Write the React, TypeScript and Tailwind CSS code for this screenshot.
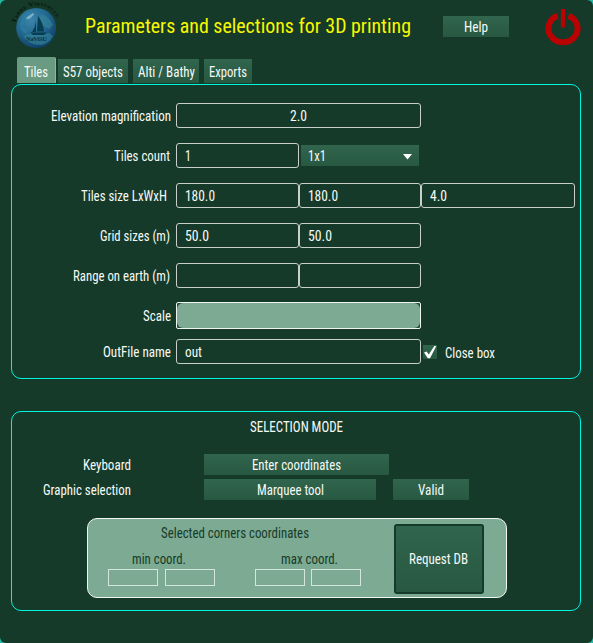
import { useLayoutEffect, useRef, useState, type ReactNode } from "react";

function Fit({ w, children, className = "" }: { w: number; children: string; className?: string }) {
  const ref = useRef<HTMLSpanElement>(null);
  const [scale, setScale] = useState(0.88);
  useLayoutEffect(() => {
    if (ref.current && ref.current.offsetWidth) setScale(w / ref.current.getBoundingClientRect().width * scale);
  }, [w]);
  return (
    <span className={`inline-block shrink-0 whitespace-nowrap ${className}`} style={{ width: w }}>
      <span ref={ref} className="inline-block origin-left" style={{ transform: `scaleX(${scale})` }}>
        {children}
      </span>
    </span>
  );
}

const gradient = "bg-linear-to-b from-[#31654d] to-[#285841]";

function Button({ className = "", children }: { className?: string; children: ReactNode }) {
  return <button className={`flex items-center justify-center ${gradient} ${className}`}>{children}</button>;
}

function Row({ label, w, className = "", pad = "pr-[5px]", children }: { label: string; w: number; className?: string; pad?: string; children: ReactNode }) {
  return (
    <div className={`flex items-center ${className}`}>
      <div className={`flex w-[164px] justify-end ${pad}`}>
        <Fit w={w}>{label}</Fit>
      </div>
      {children}
    </div>
  );
}

function Field({ className = "", children }: { className?: string; children?: ReactNode }) {
  return <div className={`flex h-[25px] shrink-0 items-center rounded-[3px] border border-[#c9d0cc] ${className}`}>{children}</div>;
}

function Logo() {
  return (
    <svg width="52" height="50" viewBox="0 0 52 50" className="shrink-0">
      <defs>
        <radialGradient id="globe" cx="38%" cy="30%" r="72%">
          <stop offset="0" stopColor="#3c85a8" />
          <stop offset="0.55" stopColor="#226890" />
          <stop offset="1" stopColor="#103f68" />
        </radialGradient>
        <path id="arc" d="M5.400 23.500 A22 22 0 0 1 48.500 22.500" />
      </defs>
      <circle cx="26.2" cy="28" r="20" fill="url(#globe)" />
      <path d="M10 23q4-11 12-12q-2 6-7 10l-2 6 5 3-2 4q-7-4-6-11" fill="#2f7fa6" opacity=".6" />
      <path d="M31 14q9 3 12 11l-4 4-5-3-4-7zM13 36q9-4 17-1l9-2 4 3q-4 8-12 9-12 0-18-9" fill="#348396" opacity=".65" />
      <path d="M17 17l6-4 1 1.500-4 4-4 1z" fill="#8fc0d4" opacity=".8" />
      <path d="M28 16q5.500 8 6 15.500h-7zM26 20v12h-4q3.500-5 4-12zM20 32.500h17l-3 2.500H23z" fill="#073d50" />
      <text x="16" y="40.500" fontSize="6.500" fontWeight="700" fontFamily="Liberation Serif, serif" fill="#0a3443" textLength="21">NaViSU</text>
      <text fontSize="6" fontWeight="700" fontFamily="Liberation Serif, serif" fill="#04150f" style={{ fontVariant: "small-caps" }}>
        <textPath href="#arc" textLength="55" lengthAdjust="spacingAndGlyphs">Terre Virtuelle</textPath>
      </text>
    </svg>
  );
}

function Power() {
  return (
    <svg width="36" height="37" viewBox="0 0 36 37">
      <path d="M12.500 6.800A14.600 13.700 0 1 0 23.500 6.800" fill="none" stroke="#b90202" strokeWidth="6" />
      <path d="M18 0v18.500" stroke="#163a29" strokeWidth="8" />
      <path d="M18 0v18.500" stroke="#b90202" strokeWidth="4.200" />
    </svg>
  );
}

function CoordBox({ className = "" }: { className?: string }) {
  return <div className={`h-[17px] w-[50px] border border-[#d4e5dc] ${className}`} />;
}

export default function App() {
  return (
    <div className="h-[643px] w-[593px] overflow-hidden bg-[#20b9a5]">
      <div className="flex h-full flex-col rounded-[6px] bg-[#163a29] font-['Roboto_Condensed','Roboto',sans-serif] text-[14px] leading-[16px] text-[#f6faf7] [font-stretch:75%]">
        <header className="flex h-[57px] shrink-0 items-start pl-[10px]">
          <Logo />
          <div className="ml-[23px] pt-[14px] text-[20px] leading-[24px] text-[#f8f800]">
            <Fit w={326}>Parameters and selections for 3D printing</Fit>
          </div>
          <Button className="mt-[16px] ml-[32px] h-[21px] w-[66px]"><Fit w={24}>Help</Fit></Button>
          <div className="mt-[9px] ml-[36px]"><Power /></div>
        </header>
        <nav className="flex h-[27px] shrink-0 items-end pb-px pl-[17px]">
          <button className="flex h-[26px] w-[39px] items-center justify-center rounded-t-[2px] border-r border-[#83bd8e] bg-[#689b81] pt-[3px]"><Fit w={24}>Tiles</Fit></button>
          <Button className="ml-[2px] h-[24px] w-[70px] pt-px"><Fit w={60}>S57 objects</Fit></Button>
          <Button className="ml-[5px] h-[24px] w-[66px] pt-px"><Fit w={57}>Alti / Bathy</Fit></Button>
          <Button className="ml-[5px] h-[24px] w-[48px] pt-px"><Fit w={38}>Exports</Fit></Button>
        </nav>
        <main className="ml-[11px] flex h-[295px] w-[570px] shrink-0 flex-col rounded-[10px] border border-[#00f5e0] pt-[18px]">
          <Row label="Elevation magnification" w={120}>
            <Field className="w-[245px] justify-center"><Fit w={17}>2.0</Fit></Field>
          </Row>
          <Row label="Tiles count" w={56} pad="pr-[6px]" className="mt-[15px]">
            <Field className="w-[123px] pl-[8px]"><Fit w={6}>1</Fit></Field>
            <div className={`ml-[2px] flex h-[21px] w-[118px] items-center justify-between pr-[7px] pl-[7px] ${gradient}`}>
              <Fit w={18}>1x1</Fit>
              <svg width="9" height="6" viewBox="0 0 9 6" className="mt-[2px]"><path d="M0 0h9L4.500 5.500z" fill="#fff" /></svg>
            </div>
          </Row>
          <Row label="Tiles size LxWxH" w={86} pad="pr-[9px]" className="mt-[15px]">
            <Field className="w-[123px] pl-[8px]"><Fit w={30}>180.0</Fit></Field>
            <Field className="w-[122px] pl-[8px]"><Fit w={30}>180.0</Fit></Field>
            <Field className="w-[154px] pl-[8px]"><Fit w={17}>4.0</Fit></Field>
          </Row>
          <Row label="Grid sizes (m)" w={70} pad="pr-[6px]" className="mt-[15px]">
            <Field className="w-[123px] pl-[8px]"><Fit w={24}>50.0</Fit></Field>
            <Field className="w-[122px] pl-[8px]"><Fit w={24}>50.0</Fit></Field>
          </Row>
          <Row label="Range on earth (m)" w={97} pad="pr-[6px]" className="mt-[15px]">
            <Field className="w-[123px]" />
            <Field className="w-[122px]" />
          </Row>
          <Row label="Scale" w={28} className="mt-[14px]">
            <div className="h-[27px] w-[245px] rounded-[2px] border border-[#eef5f1] bg-[#244b39]">
              <div className="h-full rounded-[6px] bg-[#7caa93]" />
            </div>
          </Row>
          <Row label="OutFile name" w={68} pad="pr-[5px]" className="mt-[10px]">
            <Field className="w-[245px] pl-[8px]"><Fit w={17}>out</Fit></Field>
            <div className={`mt-px ml-[2px] flex h-[14px] w-[14px] items-center justify-center ${gradient}`}>
              <svg width="14" height="14" viewBox="0 0 14 14"><path d="M1 7.500L3.700 6.500l2 3L11.500.8l1.700.5L7 13.200H4.800z" fill="#fff" /></svg>
            </div>
            <Fit w={50} className="mt-[2px] ml-[8px]">Close box</Fit>
          </Row>
        </main>
        <section className="mt-[32px] ml-[11px] flex h-[200px] w-[570px] shrink-0 flex-col rounded-[10px] border border-[#00f5e0] pt-[7px]">
          <div className="flex justify-center"><Fit w={93}>SELECTION MODE</Fit></div>
          <div className="mt-[19px] flex h-[21px] items-center">
            <div className="flex w-[119px] justify-end"><Fit w={48}>Keyboard</Fit></div>
            <Button className="ml-[73px] h-[21px] w-[185px]"><Fit w={89}>Enter coordinates</Fit></Button>
          </div>
          <div className="mt-[4px] flex h-[21px] items-center">
            <div className="flex w-[119px] justify-end"><Fit w={88}>Graphic selection</Fit></div>
            <Button className="ml-[73px] h-[21px] w-[172px]"><Fit w={67}>Marquee tool</Fit></Button>
            <Button className="ml-[17px] h-[21px] w-[76px]"><Fit w={26}>Valid</Fit></Button>
          </div>
          <div className="mt-[18px] ml-[75px] flex h-[80px] w-[420px] items-start rounded-[10px] border border-[#f2f7f4] bg-[#7caa93] text-[#163a29]">
            <div className="flex w-[306px] flex-col pt-[6px]">
              <Fit w={148} className="ml-[73px]">Selected corners coordinates</Fit>
              <div className="mt-[10px] flex">
                <Fit w={54} className="ml-[44px]">min coord.</Fit>
                <Fit w={57} className="ml-[95px]">max coord.</Fit>
              </div>
              <div className="mt-[2px] flex pl-[20px]">
                <CoordBox /><CoordBox className="ml-[7px]" />
                <CoordBox className="ml-[40px]" /><CoordBox className="ml-[6px]" />
              </div>
            </div>
            <Button className="mt-[5px] h-[70px] w-[90px] rounded-[3px] border-2 border-[#163a29] pr-[2px] text-[#f6faf7]"><Fit w={59}>Request DB</Fit></Button>
          </div>
        </section>
      </div>
    </div>
  );
}
